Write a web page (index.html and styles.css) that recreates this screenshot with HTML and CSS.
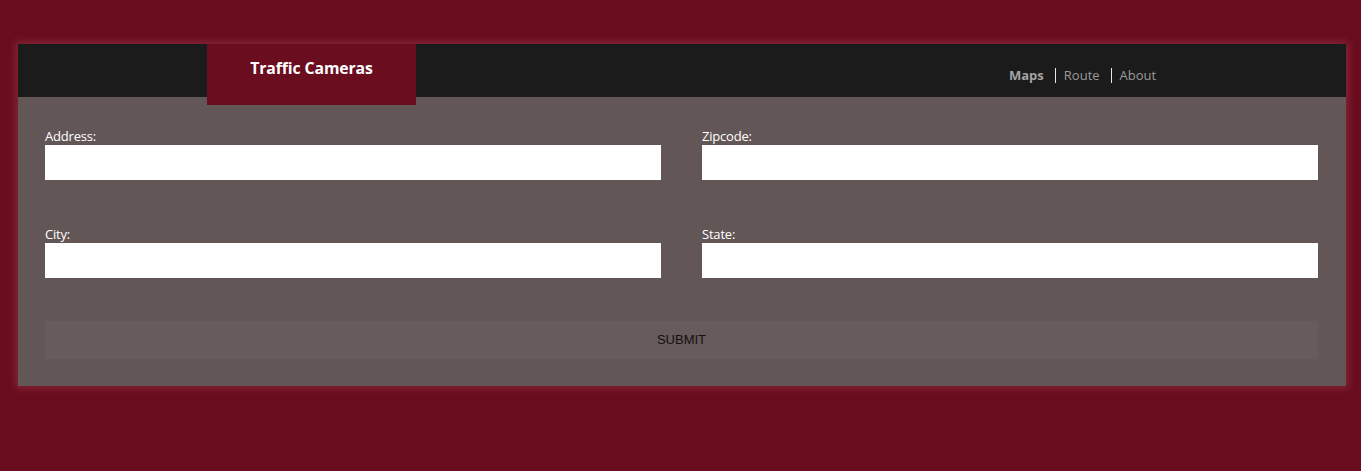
FILE: index.html
```html
<!DOCTYPE html>
<html>
<head>
<meta charset="utf-8">
<link rel="stylesheet" href="styles.css">
</head>
<body>
<div class="app">
  <header class="topbar">
    <div class="brand">Traffic Cameras</div>
    <nav class="nav">
      <a class="nav-link active">Maps</a>
      <span class="sep"></span>
      <a class="nav-link">Route</a>
      <span class="sep"></span>
      <a class="nav-link">About</a>
    </nav>
  </header>
  <form class="panel">
    <div class="grid">
      <label class="field"><span class="label">Address:</span><input class="input" type="text"></label>
      <label class="field"><span class="label">Zipcode:</span><input class="input" type="text"></label>
      <label class="field"><span class="label">City:</span><input class="input" type="text"></label>
      <label class="field"><span class="label">State:</span><input class="input" type="text"></label>
    </div>
    <button class="submit" type="button">SUBMIT</button>
  </form>
</div>
</body>
</html>
```

FILE: styles.css
```css
html, body {
  margin: 0;
  padding: 0;
}
body {
  background: #6a0d1f;
  font-family: "Open Sans", "Noto Sans", sans-serif;
  padding: 44px 15px 0 18px;
  height: 471px;
  box-sizing: border-box;
}
.app {
  width: 1328px;
  box-shadow: 0 0 8px 2px rgba(160, 60, 80, 0.55);
  background: #635656;
}
.topbar {
  height: 53px;
  background: #1b1b1b;
  display: flex;
  align-items: flex-start;
  position: relative;
}
.brand {
  margin-left: 189px;
  width: 209px;
  height: 61px;
  background: #6a0d1f;
  color: #fff;
  font-weight: 700;
  font-size: 15.8px;
  letter-spacing: -0.1px;
  display: flex;
  justify-content: center;
  padding-top: 13px;
  box-sizing: border-box;
  position: relative;
  z-index: 1;
}
.nav {
  margin-left: 593px;
  margin-top: 22px;
  display: flex;
  align-items: center;
  font-size: 13px;
}
.nav-link {
  color: #9a9a9a;
  line-height: 18px;
}
.nav-link.active {
  font-weight: 700;
  color: #a3a3a3;
}
.sep {
  width: 1px;
  height: 15px;
  background: #e6e6e6;
  margin: 0 8px 0 11px;
}
.panel {
  padding: 32px 28px 27px 27px;
  display: flex;
  flex-direction: column;
  gap: 43px;
}
.grid {
  display: grid;
  grid-template-columns: 616px 616px;
  column-gap: 41px;
  row-gap: 47px;
}
.field {
  display: flex;
  flex-direction: column;
}
.label {
  color: #fff;
  font-size: 13px;
  line-height: 14px;
  padding-bottom: 2px;
  letter-spacing: -0.2px;
}
.input {
  height: 35px;
  border: 0;
  margin: 0;
  padding: 0 6px;
  background: #fff;
  box-sizing: border-box;
  width: 100%;
}
.submit {
  height: 38px;
  width: 100%;
  border: 0;
  margin: 0;
  background: #685b5c;
  color: #111;
  font-family: "Liberation Sans", Arial, sans-serif;
  font-size: 13px;
  padding: 0 0 1px;
}
```
